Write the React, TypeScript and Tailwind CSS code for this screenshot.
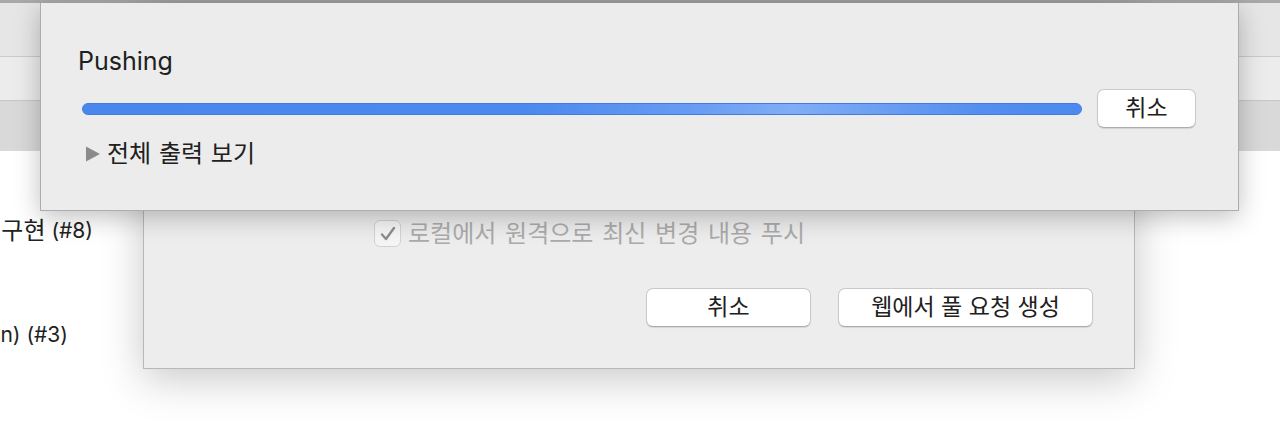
import React from 'react';

const font = "font-['Inter','Noto_Sans_CJK_KR',sans-serif]";

function MacButton({ label, width }: { label: string; width: string }) {
  return (
    <button
      className={`${width} h-[39px] shrink-0 rounded-[7px] bg-white border border-[#c9c9c9] border-b-[#acacac] shadow-[0_1px_1px_rgba(0,0,0,0.10)] text-[23px] leading-none text-[#202020] flex items-center justify-center`}
    >
      {label}
    </button>
  );
}

export default function App() {
  return (
    <div className={`relative w-[1280px] h-[426px] overflow-hidden bg-white ${font}`}>
      {/* 뒤쪽 창 */}
      <div className="h-[3px] bg-[#a9a9a9]" />
      <div className="h-[54px] bg-[#e6e6e6] border-b border-[#cacaca]" />
      <div className="h-[44px] bg-[#ececec] border-b border-[#c6c6c6]" />
      <div className="h-[50px] bg-[#d9d9d9]" />

      <div className="pt-[60px] text-[21px] text-[#222]">
        <div className="w-[93px] h-[40px] flex items-center justify-end overflow-hidden whitespace-nowrap">
          <span className="text-[24px]">구현</span>&nbsp;(#8)
        </div>
        <div className="mt-[64px] w-[68px] h-[40px] flex items-center justify-end overflow-hidden whitespace-nowrap">
          n) (#3)
        </div>
      </div>

      {/* 풀 요청 시트 */}
      <div className="absolute left-[143px] top-[3px] w-[992px] h-[366px] bg-[#ededed] border-x border-b border-[#b8b8b8] shadow-[0_10px_40px_rgba(0,0,0,0.22)]">
        <div className="pt-[217px] pl-[230px] flex items-center h-[244px]">
          <div className="w-[27px] h-[27px] rounded-[6px] border border-[#d2d2d2] bg-[#f5f5f5] flex items-center justify-center">
            <svg width="20" height="20" viewBox="0 0 20 20">
              <path d="M4 10.5 L8 15 L16 4" fill="none" stroke="#8d8d8d" strokeWidth="2.4" strokeLinecap="round" strokeLinejoin="round" />
            </svg>
          </div>
          <span className="ml-[7px] text-[24px] text-[#ababab] [word-spacing:2px]">로컬에서 원격으로 최신 변경 내용 푸시</span>
        </div>
        <div className="mt-[41px] pr-[41px] flex justify-end gap-[27px]">
          <MacButton label="취소" width="w-[165px]" />
          <MacButton label="웹에서 풀 요청 생성" width="w-[255px]" />
        </div>
      </div>

      {/* 진행 시트 */}
      <div className="absolute left-[40px] top-[3px] w-[1199px] h-[208px] bg-[#ececec] border-x border-b border-[#adadad] shadow-[0_6px_24px_rgba(0,0,0,0.25)]">
        <div className="pt-[43px] pl-[37px] text-[#202020]">
          <div className="text-[25px] leading-[30px]">Pushing</div>
          <div className="mt-[13px] flex items-center h-[39px]">
            <div className="ml-[4px] w-[1000px] h-[12px] rounded-full border border-[#3f7de2] bg-[linear-gradient(90deg,#4a87ec_0%,#4c89ee_45%,#6a9df3_62%,#80adf6_71%,#6c9ef2_80%,#548ef0_90%,#4d89ee_100%)]" />
            <div className="ml-[15px]">
              <MacButton label="취소" width="w-[99px]" />
            </div>
          </div>
          <div className="mt-[11px] h-[30px] flex items-center">
            <svg width="16" height="16" viewBox="0 0 16 16" className="ml-[7px]">
              <path d="M1 0.5 L15 8 L1 15.5 Z" fill="#8b8b8b" />
            </svg>
            <span className="ml-[6px] text-[24px] [word-spacing:1px]">전체 출력 보기</span>
          </div>
        </div>
      </div>
    </div>
  );
}
